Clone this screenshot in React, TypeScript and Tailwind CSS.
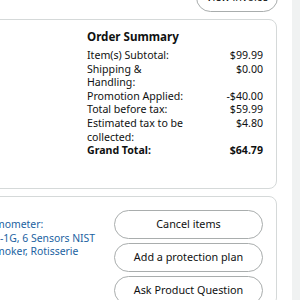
import React from "react";

const rows: { label: string; value: string; bold?: boolean }[] = [
  { label: "Item(s) Subtotal:", value: "$99.99" },
  { label: "Shipping & Handling:", value: "$0.00" },
  { label: "Promotion Applied:", value: "-$40.00" },
  { label: "Total before tax:", value: "$59.99" },
  { label: "Estimated tax to be collected:", value: "$4.80" },
  { label: "Grand Total:", value: "$64.79", bold: true },
];

const PillButton = ({ children, className = "" }: { children: React.ReactNode; className?: string }) => (
  <button
    className={`h-[29px] w-full rounded-full border border-[#a9adad] bg-white text-[10.8px] text-[#0f1111] ${className}`}
  >
    {children}
  </button>
);

export default function App() {
  return (
    <div className="flex h-[300px] w-[300px] overflow-hidden bg-white font-['Noto_Sans',Arial,sans-serif] text-[#0f1111]">
      <div className="flex w-[292px] shrink-0 flex-col">
        <div className="-mt-[17px] flex justify-end pr-[14px]">
          <div className="w-[82px]">
            <PillButton>View invoice</PillButton>
          </div>
        </div>

        <div className="-ml-[10px] mr-[15px] mt-[7px] flex h-[170px] shrink-0 rounded-lg border border-[#d5d9d9] pr-[13px] pt-[10px]">
          <div className="flex-1" />
          <div className="w-[176px] text-[10.6px] leading-[13.6px]">
            <div className="mb-[5px] text-[11.6px] font-bold leading-[14px]">Order Summary</div>
            {rows.map((r) => (
              <div key={r.label} className={`flex justify-between ${r.bold ? "font-bold" : ""}`}>
                <span className="w-[100px]">{r.label}</span>
                <span className="text-right">{r.value}</span>
              </div>
            ))}
          </div>
        </div>

        <div className="-ml-[10px] mr-[15px] mt-[7px] flex flex-1 rounded-lg border border-[#d5d9d9] pl-[9px] pr-[13px] pt-[13px]">
          <div className="mt-[8px] flex-1 text-[10.4px] leading-[13.5px] text-[#2162a1]">
            <div className="-ml-[5px] whitespace-nowrap">mometer:</div>
            <div className="whitespace-nowrap">-1G, 6 Sensors NIST</div>
            <div className="-ml-[5px] whitespace-nowrap">moker, Rotisserie</div>
          </div>
          <div className="flex w-[149px] flex-col gap-[4px]">
            <PillButton>Cancel items</PillButton>
            <PillButton>Add a protection plan</PillButton>
            <PillButton>Ask Product Question</PillButton>
          </div>
        </div>
      </div>
      <div className="w-[8px] bg-[#f0f2f2]" />
    </div>
  );
}
